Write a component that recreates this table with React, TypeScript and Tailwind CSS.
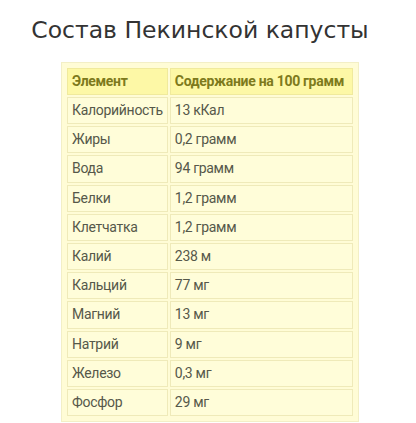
import React from 'react'

const rows = [
  ['Калорийность', '13 кКал'],
  ['Жиры', '0,2 грамм'],
  ['Вода', '94 грамм'],
  ['Белки', '1,2 грамм'],
  ['Клетчатка', '1,2 грамм'],
  ['Калий', '238 м'],
  ['Кальций', '77 мг'],
  ['Магний', '13 мг'],
  ['Натрий', '9 мг'],
  ['Железо', '0,3 мг'],
  ['Фосфор', '29 мг'],
]

const App = () => {
  return (
    <div className="w-[416px] h-[423px] bg-white overflow-hidden">
      <h1 className="pt-[14px] pr-[16px] text-center text-[23.5px] leading-[32px] text-[#333] font-['DejaVu_Sans',sans-serif]">
        Состав Пекинской капусты
      </h1>
      <div className="ml-[61px] mt-[16px] w-[298px] bg-[#fffcd6] border border-[#f3efc6] p-[3px] font-['Roboto',sans-serif] text-[14px] tracking-[-0.3px]">
        <table className="w-full border-separate border-spacing-[2px] whitespace-nowrap">
          <thead>
            <tr className="bg-[#fdf8a6]">
              <th className="h-[27px] px-[4px] text-left font-bold text-[#7d7a1c] border border-[#f0ea9c] w-[99px]">Элемент</th>
              <th className="h-[27px] px-[4px] text-left font-bold text-[#7d7a1c] border border-[#f0ea9c]">Содержание на 100 грамм</th>
            </tr>
          </thead>
          <tbody>
            {rows.map((row) => (
              <tr key={row[0]}>
                <td className="h-[27.2px] px-[4px] text-[#56584a] border border-[#efeab9] bg-[#fffdd9]">{row[0]}</td>
                <td className="h-[27.2px] px-[4px] text-[#56584a] border border-[#efeab9] bg-[#fffdd9]">{row[1]}</td>
              </tr>
            ))}
          </tbody>
        </table>
      </div>
    </div>
  )
}

export default App
